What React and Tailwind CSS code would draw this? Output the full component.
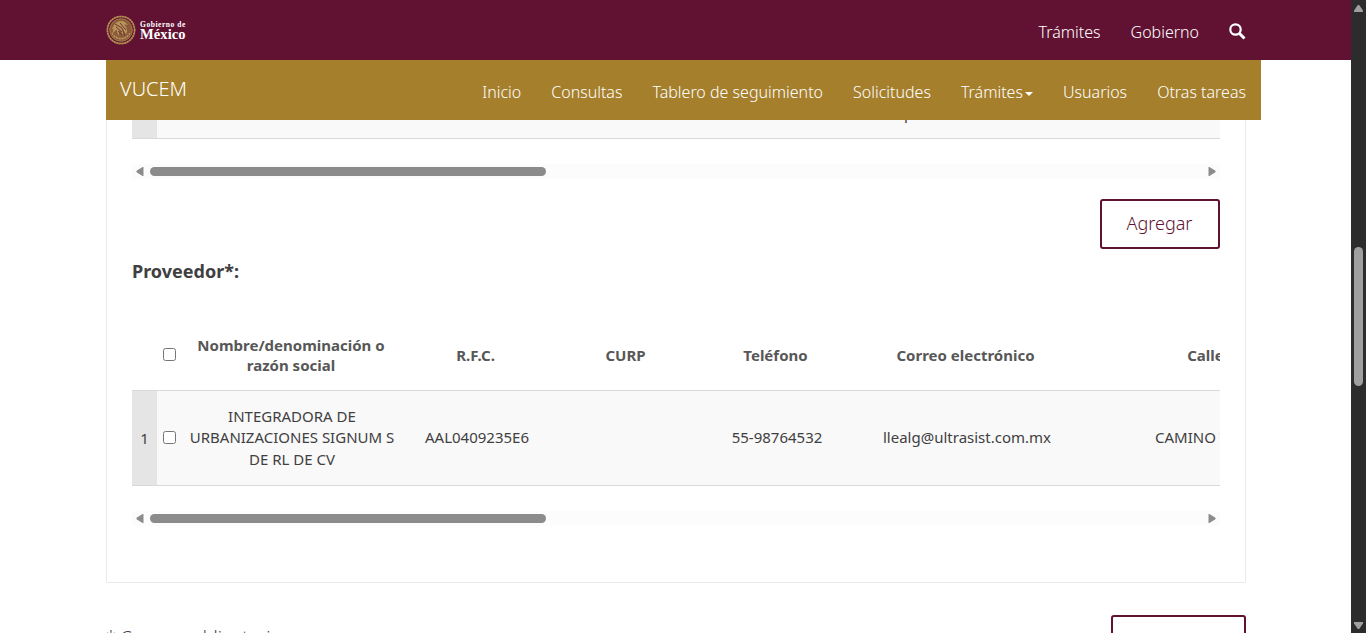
import React from "react";

const navItems = ["Inicio", "Consultas", "Tablero de seguimiento", "Solicitudes", "Trámites", "Usuarios", "Otras tareas"];
const grid = "grid w-[1199px] grid-cols-[25px_24px_220px_150px_150px_150px_230px_250px] items-center text-center text-[15px]";

function Seal() {
  return (
    <svg className="h-[30px] w-[30px]" viewBox="0 0 30 30" fill="none">
      <circle cx="15" cy="15" r="13.600" stroke="#9c7040" strokeWidth="1.500" />
      <circle cx="15" cy="15" r="13.600" stroke="#b8965a" strokeWidth="1.500" strokeDasharray="1.500 1.200" />
      <circle cx="15" cy="15" r="11.300" fill="#8a5a3a" stroke="#a87f47" strokeWidth=".9" />
      <path d="M8 10c2-4 8-5 11-3l3 3-4-.4c3 3 4 6 2 10l-3-5 .5 6-4-6-1 7-2-7-4 4 1-5-2 1 2.500-4.600z" fill="#b8935a" />
      <path d="M9 9l7 4 3 8M10 12l6 5M14 8l6 7M12 16l4 4" stroke="#6e3830" strokeWidth="1" />
      <path d="M6 18c3 6 13 8 18 0M8 21c4 4 10 4 14 0" stroke="#b8955a" strokeWidth="1.200" strokeDasharray="2 .8" />
    </svg>
  );
}

function Logo() {
  return (
    <div className="flex items-center gap-1 text-white" style={{ fontFamily: '"Liberation Serif", serif' }}>
      <Seal />
      <div className="flex flex-col">
        <span className="text-[7.5px] leading-[8px] font-bold tracking-[0.55px] whitespace-nowrap">Gobierno de</span>
        <span className="text-[14.5px] leading-[11px] font-bold tracking-[0.1px] whitespace-nowrap">México</span>
      </div>
    </div>
  );
}

function ScrollTrack() {
  return (
    <div className="flex h-[15px] w-full items-center bg-[#fcfcfc]">
      <svg className="ml-1 h-[9px] w-2" viewBox="0 0 8 9"><path d="M7.500 0v9H6.600L.5 5.200v-1.400L6.600 0z" fill="#8b8b8b" /></svg>
      <div className="ml-1.5 h-[9px] w-[396px] rounded-full bg-[#8b8b8b]" />
      <svg className="mr-1 ml-auto h-[9px] w-2" viewBox="0 0 8 9"><path d="M.5 0v9h.9l6.100-3.800V3.800L1.400 0z" fill="#8b8b8b" /></svg>
    </div>
  );
}

function Box() {
  return <input type="checkbox" className="mb-0.5 block h-[13px] w-[13px] justify-self-center" />;
}

export default function App() {
  return (
    <div className="flex h-[633px] w-[1366px] overflow-hidden bg-white text-[#404041]" style={{ fontFamily: '"Noto Sans", sans-serif' }}>
      <div className="flex h-full w-[1351px] flex-col overflow-hidden">
        <header className="flex h-[60px] shrink-0 items-center bg-[#611232] pr-[105px] pl-[106px]">
          <Logo />
          <nav className="ml-auto flex items-center gap-[30px] pt-1 text-[16px] font-light text-white">
            <span>Trámites</span>
            <span>Gobierno</span>
            <svg className="-mt-0.5 h-[17px] w-[17px]" viewBox="0 0 17 17" fill="none" stroke="white">
              <circle cx="6.500" cy="6.500" r="5.200" strokeWidth="2.200" />
              <path d="M10.500 10.500l5 5" strokeWidth="3" />
            </svg>
          </nav>
        </header>
        <div className="ml-[106px] flex h-[60px] w-[1155px] shrink-0 items-center bg-[#a57f2c] pr-[15px] pl-3.5 text-white">
          <span className="pb-0.5 text-[20px] font-light">VUCEM</span>
          <nav className="ml-auto flex items-center gap-[30px] pt-1 text-[16px] font-light">
            {navItems.map((item) => (
              <span key={item} className="flex items-center whitespace-nowrap">
                {item}
                {item === "Trámites" && (
                  <svg className="mt-1 ml-0.5 h-1 w-2" viewBox="0 0 8 4"><path d="M0 0h8L4 4z" fill="white" /></svg>
                )}
              </span>
            ))}
          </nav>
        </div>

        <main className="ml-[106px] w-[1140px]">
          <section className="flex h-[463px] flex-col border border-t-0 border-[#eaeaea] px-[25px]">
            <div className="h-[19px] w-full shrink-0 overflow-hidden border-b border-[#d9d9d9] bg-[#f9f9f9]">
              <div className="flex h-full">
                <div className="h-full w-[25px] bg-[#e5e5e5]" />
                <span className="-mt-[17px] ml-[747px] text-[15px] leading-[20px]">p</span>
              </div>
            </div>
            <div className="mt-[25px]"><ScrollTrack /></div>
            <button className="mt-5 h-[50px] w-[120px] shrink-0 self-end rounded-[3px] border-2 border-[#611232] bg-white pr-px pb-0.5 text-[18px] font-light text-[#611232]">Agregar</button>
            <h3 className="mt-[9px] text-[18px] leading-[26px] font-bold">Proveedor*:</h3>
            <div className="mt-[36px] w-full shrink-0 overflow-hidden">
              <div className={`${grid} h-[70px] leading-5 font-bold text-[#575757]`}>
                <span />
                <Box />
                <span className="pr-2 pl-2">Nombre/denominación o razón social</span>
                <span className="pr-px">R.F.C.</span>
                <span className="pr-px">CURP</span>
                <span className="pr-px">Teléfono</span>
                <span className="pr-px">Correo electrónico</span>
                <span className="pr-px">Calle</span>
              </div>
              <div className={`${grid} h-[96px] border-y border-[#d9d9d9] bg-[#f9f9f9] leading-[21.430px]`}>
                <span className="flex h-full items-center justify-center bg-[#e5e5e5] pt-0.5">1</span>
                <Box />
                <span className="pr-0.5 pl-1">INTEGRADORA DE URBANIZACIONES SIGNUM S DE RL DE CV</span>
                <span className="pl-0.5">AAL0409235E6</span>
                <span />
                <span className="pl-0.5">55-98764532</span>
                <span className="pl-0.5">llealg@ultrasist.com.mx</span>
                <span className="pl-[74px] text-left whitespace-nowrap">CAMINO V</span>
              </div>
            </div>
            <div className="mt-[25px]"><ScrollTrack /></div>
          </section>
          <div className="mt-8 flex items-start justify-between">
            <span className="mt-[9px] text-[18px] leading-[26px] font-light">* Campos obligatorios</span>
            <button className="h-[50px] w-[135px] rounded-[3px] border-2 border-[#611232] bg-white" aria-label="Continuar" />
          </div>
        </main>
      </div>
      <aside className="flex h-full w-[15px] flex-col items-center bg-[#2c2c2c]">
        <svg className="mt-[5px] h-[7px] w-[9px]" viewBox="0 0 9 7"><path d="M3.800 0h1.400L9 5.500V7H0V5.500z" fill="#9f9f9f" /></svg>
        <div className="mt-[235px] h-[139px] w-[9px] rounded-full bg-[#9f9f9f]" />
        <svg className="mt-auto mb-1 h-[7px] w-[9px]" viewBox="0 0 9 7"><path d="M3.800 7h1.400L9 1.500V0H0v1.500z" fill="#9f9f9f" /></svg>
      </aside>
    </div>
  );
}
